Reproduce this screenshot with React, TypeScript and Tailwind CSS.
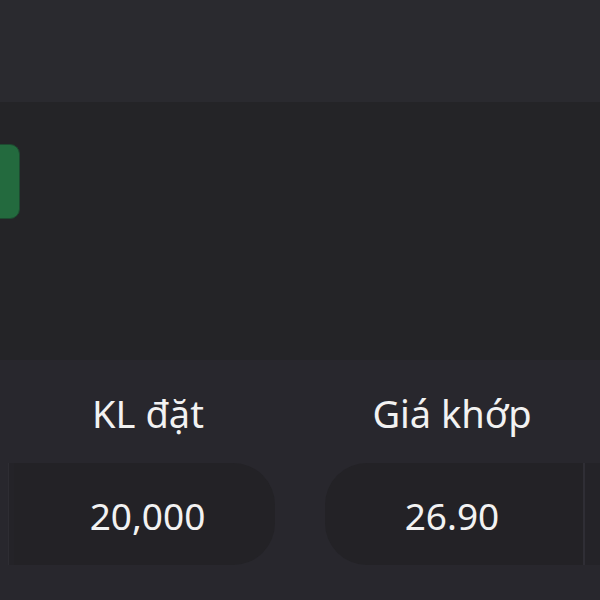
import React from "react";

export default function App() {
  return (
    <div
      className="w-[600px] h-[600px] overflow-hidden flex flex-col"
      style={{ fontFamily: '"Noto Sans", "Open Sans", sans-serif' }}
    >
      <div className="h-[102px] bg-[#2a2a2f] shrink-0" />
      <div className="h-[258px] bg-[#242427] shrink-0 flex items-start">
        <div className="ml-[-60px] mt-[42px] w-[80px] h-[75px] rounded-[10px] bg-[#236a3e] border border-[#1d4a30]" />
      </div>
      <div className="flex-1 bg-[#28272d] flex flex-col">
        <div className="flex h-[103px] items-center text-[38px] text-[#f2f2f2]">
          <div className="w-[300px] flex justify-center">
            <span className="ml-[-4px] pt-[3px]">KL đặt</span>
          </div>
          <div className="w-[300px] flex justify-center">
            <span className="pt-[3px] ml-[4px]">Giá khớp</span>
          </div>
        </div>
        <div className="flex h-[102px] text-[37px] text-[#f2f2f2]">
          <div className="w-[8px] shrink-0" />
          <div className="w-[1px] bg-[#2e2d33] shrink-0" />
          <div className="w-[5px] shrink-0 bg-[#242328]" />
          <div className="w-[261px] shrink-0 bg-[#232226] rounded-r-[42px] flex items-center justify-center">
            <span className="ml-[6px] pt-[4px]">20,000</span>
          </div>
          <div className="w-[50px] shrink-0" />
          <div className="w-[258px] shrink-0 bg-[#232226] rounded-l-[42px] flex items-center justify-center">
            <span className="ml-[-4px] pt-[4px]">26.90</span>
          </div>
          <div className="w-[2px] shrink-0 bg-[#2f2e35]" />
          <div className="flex-1 bg-[#242328]" />
        </div>
      </div>
    </div>
  );
}
